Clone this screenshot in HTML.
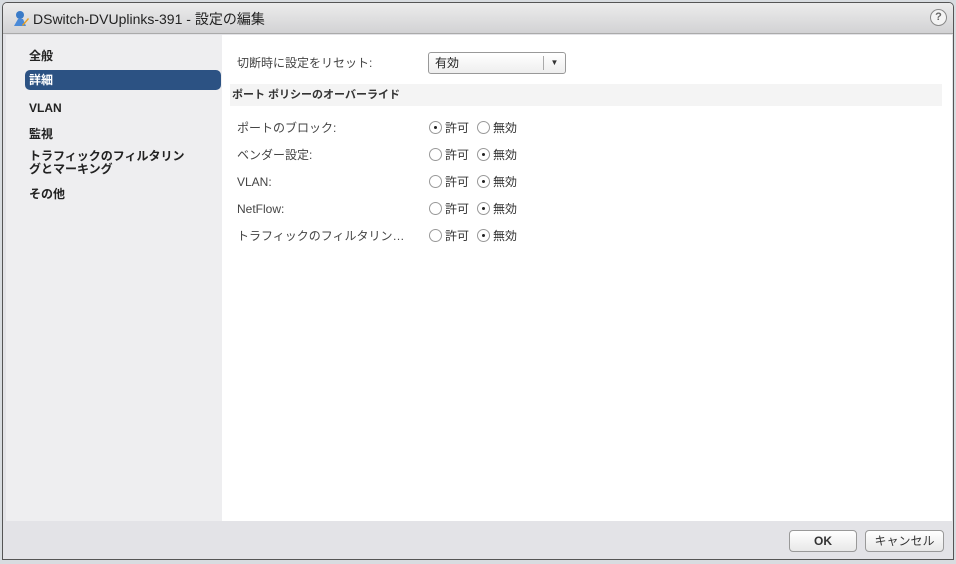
<!DOCTYPE html>
<html><head><meta charset="utf-8"><style>
*{margin:0;padding:0;box-sizing:border-box}
body{width:956px;height:564px;background:#d8dce0;font-family:"Liberation Sans","Noto Sans CJK JP",sans-serif;font-size:12px;line-height:14px;color:#333;position:relative;overflow:hidden}
.dlg{position:absolute;left:2px;top:2px;width:952px;height:558px;background:#e3e3e7;border:1px solid #555;border-radius:5px 5px 0 0;overflow:hidden}
.title{position:absolute;left:0;top:0;width:100%;height:31px;background:linear-gradient(#ececec,#d2d2d4);border-bottom:1px solid #aaa}
.title span{position:absolute;left:30px;top:8px;font-size:14px;line-height:16px;color:#222}
.help{position:absolute;right:6px;top:6px;width:17px;height:17px;border-radius:50%;border:1px solid #888;background:#f4f4f4;font-size:11px;font-weight:bold;text-align:center;line-height:15px;color:#666}
.left{position:absolute;left:3px;top:32px;width:216px;height:486px;background:#eeeef0}
.nav{position:absolute;left:23px;font-weight:bold;font-size:12px;color:#222}
.sel{position:absolute;width:196px;height:20px;background:#2c5283;border-radius:5px}
.right{position:absolute;left:219px;top:32px;width:730px;height:486px;background:#fff}
.lbl{position:absolute;left:15px;color:#444;font-size:12px;width:168px;white-space:nowrap;overflow:hidden;text-overflow:ellipsis}
.dd{position:absolute;left:206px;top:17px;width:138px;height:22px;border:1px solid #999;border-radius:3px;background:linear-gradient(#fff,#eee)}
.dd span{position:absolute;left:6px;top:3px;color:#222}
.dd i{position:absolute;right:0;top:3px;width:22px;height:14px;border-left:1px solid #aaa;font-style:normal;font-size:8px;text-align:center;line-height:14px}
.sec{position:absolute;left:8px;top:49px;width:712px;height:22px;background:#f4f4f4;font-weight:bold;font-size:11px;padding:4px 0 0 2px;color:#333}
.r{position:absolute;width:13px;height:13px;border:1px solid #999;border-radius:50%;background:#fff}
.r.on::after{content:"";position:absolute;left:4px;top:4px;width:3px;height:3px;background:#222;border-radius:50%}
.rt{position:absolute;font-size:12px;color:#333}
.btn{position:absolute;top:527px;height:22px;border:1px solid #999;border-radius:4px;background:linear-gradient(#fff,#e8e8e8);text-align:center;line-height:20px;font-size:12px}
</style></head><body>
<div class="dlg">
<div class="title"><svg style="position:absolute;left:9px;top:7px" width="18" height="18" viewBox="0 0 18 18"><circle cx="8" cy="5" r="4" fill="#3a7bc8"/><path d="M2 16 L6 9 L11 9 L14 16Z" fill="#4a8ad8"/><path d="M10 15 L16 8 L17 9 L11 16Z" fill="#e8a020"/></svg><span>DSwitch-DVUplinks-391 - 設定の編集</span><div class="help">?</div></div>
<div class="left">
<div class="nav" style="top:14px">全般</div>
<div class="sel" style="left:19px;top:35px"></div>
<div class="nav" style="top:38px;color:#fff">詳細</div>
<div class="nav" style="top:66px">VLAN</div>
<div class="nav" style="top:92px">監視</div>
<div class="nav" style="top:115px;line-height:13px">トラフィックのフィルタリン<br>グとマーキング</div>
<div class="nav" style="top:152px">その他</div>
</div>
<div class="right">
<div class="lbl" style="top:21px">切断時に設定をリセット:</div>
<div class="dd"><span>有効</span><i>▼</i></div>
<div class="sec">ポート ポリシーのオーバーライド</div>
<div class="lbl" style="top:86px">ポートのブロック:</div>
<div class="lbl" style="top:113px">ベンダー設定:</div>
<div class="lbl" style="top:140px">VLAN:</div>
<div class="lbl" style="top:167px">NetFlow:</div>
<div class="lbl" style="top:194px">トラフィックのフィルタリングとマーキング</div>
<div class="r on" style="left:207px;top:86px"></div><div class="rt" style="left:223px;top:86px">許可</div><div class="r" style="left:255px;top:86px"></div><div class="rt" style="left:271px;top:86px">無効</div>
<div class="r" style="left:207px;top:113px"></div><div class="rt" style="left:223px;top:113px">許可</div><div class="r on" style="left:255px;top:113px"></div><div class="rt" style="left:271px;top:113px">無効</div>
<div class="r" style="left:207px;top:140px"></div><div class="rt" style="left:223px;top:140px">許可</div><div class="r on" style="left:255px;top:140px"></div><div class="rt" style="left:271px;top:140px">無効</div>
<div class="r" style="left:207px;top:167px"></div><div class="rt" style="left:223px;top:167px">許可</div><div class="r on" style="left:255px;top:167px"></div><div class="rt" style="left:271px;top:167px">無効</div>
<div class="r" style="left:207px;top:194px"></div><div class="rt" style="left:223px;top:194px">許可</div><div class="r on" style="left:255px;top:194px"></div><div class="rt" style="left:271px;top:194px">無効</div>
</div>
<div class="btn" style="left:786px;width:68px;font-weight:bold">OK</div>
<div class="btn" style="left:862px;width:79px">キャンセル</div>
</div>
</body></html>
